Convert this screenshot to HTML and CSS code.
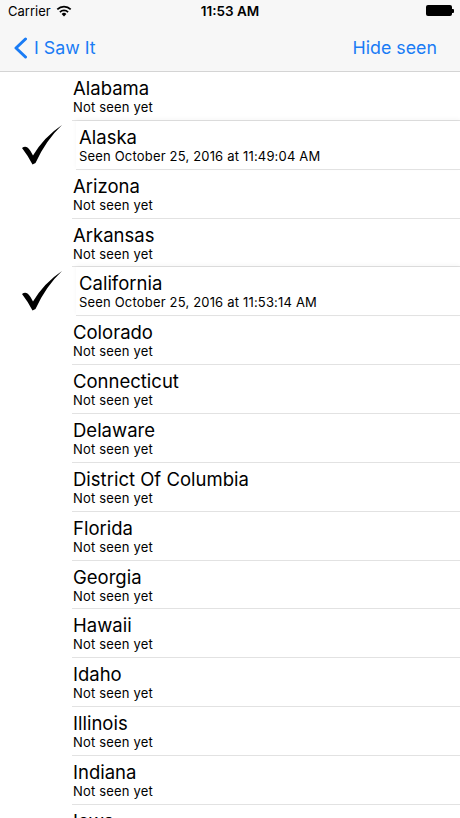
FILE: index.html
```html
<!DOCTYPE html>
<html lang="en">
<head>
    <meta charset="UTF-8">
    <meta name="viewport" content="width=device-width, initial-scale=1.0">
    <title>I Saw It</title>
    <link rel="stylesheet" href="styles.css">
</head>
<body>
    <header class="top">
        <div class="status-bar">
            <div class="status-left">
                <span>Carrier</span>
                <svg class="wifi" width="16" height="12" viewBox="0 0 16 12">
                    <path d="M8 11.5 L5.6 8.9 A3.4 3.4 0 0 1 10.4 8.9 Z" fill="#000"/>
                    <path d="M3.9 7.1 A5.9 5.9 0 0 1 12.1 7.1" stroke="#000" stroke-width="1.7" fill="none"/>
                    <path d="M1.3 4.4 A9.5 9.5 0 0 1 14.7 4.4" stroke="#000" stroke-width="1.7" fill="none"/>
                </svg>
            </div>
            <div class="status-time">11:53 AM</div>
            <div class="status-right">
                <span class="battery"></span>
                <span class="battery-tip"></span>
            </div>
        </div>
        <nav class="nav-bar">
            <a class="nav-back" href="#">
                <svg width="15" height="22" viewBox="0 0 15 22">
                    <path d="M12.5 2 L3 11 L12.5 20" stroke="#1a7cf5" stroke-width="3" fill="none" stroke-linecap="round" stroke-linejoin="round"/>
                </svg>
                <span>I Saw It</span>
            </a>
            <a class="nav-action" href="#">Hide seen</a>
        </nav>
    </header>

    <ul class="state-list" id="stateList"></ul>

    <script>
        const states = [
            ["Alabama", null],
            ["Alaska", "October 25, 2016 at 11:49:04 AM"],
            ["Arizona", null],
            ["Arkansas", null],
            ["California", "October 25, 2016 at 11:53:14 AM"],
            ["Colorado", null],
            ["Connecticut", null],
            ["Delaware", null],
            ["District Of Columbia", null],
            ["Florida", null],
            ["Georgia", null],
            ["Hawaii", null],
            ["Idaho", null],
            ["Illinois", null],
            ["Indiana", null],
            ["Iowa", null]
        ];

        const checkSvg = '<svg class="check" width="40" height="40" viewBox="0 0 40 40">' +
            '<path d="M0 23 Q4.5 19.5 8.5 26 L11 30.5 Q22 12 40 0 Q24 15 13.5 38 L10.5 39.5 Q5.5 30 0 23 Z" fill="#000"/></svg>';

        const list = document.getElementById("stateList");
        states.forEach(([name, seen]) => {
            const li = document.createElement("li");
            li.className = seen ? "state-row seen" : "state-row";
            li.innerHTML =
                '<div class="state-mark">' + (seen ? checkSvg : "") + '</div>' +
                '<div class="state-body">' +
                '<div class="state-name">' + name + '</div>' +
                '<div class="state-detail">' + (seen ? "Seen " + seen : "Not seen yet") + '</div>' +
                '</div>';
            list.appendChild(li);
        });
    </script>
</body>
</html>
```

FILE: styles.css
```css
* {
    margin: 0;
    padding: 0;
    box-sizing: border-box;
}

html, body {
    height: 100%;
    overflow: hidden;
}

body {
    font-family: 'Inter', 'Liberation Sans', sans-serif;
    background: #fff;
    color: #000;
}

a {
    text-decoration: none;
}

.top {
    background: #f7f7f7;
    border-bottom: 1px solid #d4d4d4;
}

.status-bar {
    height: 21px;
    display: flex;
    align-items: center;
    justify-content: space-between;
    padding: 0 6px 0 8px;
    font-size: 13px;
    position: relative;
}

.status-left {
    display: flex;
    align-items: center;
    gap: 5px;
}

.status-time {
    position: absolute;
    left: 0;
    right: 0;
    text-align: center;
    font-weight: 600;
    font-size: 13.5px;
}

.status-right {
    display: flex;
    align-items: center;
}

.battery {
    width: 26px;
    height: 11px;
    background: #000;
    border-radius: 2px;
}

.battery-tip {
    width: 2px;
    height: 4px;
    background: #000;
    border-radius: 0 1px 1px 0;
}

.nav-bar {
    height: 50px;
    display: flex;
    align-items: center;
    justify-content: space-between;
    padding: 3px 23px 0 13px;
    font-size: 17.8px;
}

.nav-back {
    display: flex;
    align-items: center;
    gap: 6px;
    color: #1a7cf5;
}

.nav-action {
    color: #1a7cf5;
}

.state-list {
    list-style: none;
}

.state-row {
    display: flex;
    height: 48.86px;
}

.state-mark {
    width: 72px;
    flex-shrink: 0;
    padding: 4px 0 0 22px;
}

.state-body {
    flex: 1;
    padding: 5px 0 0 1px;
    border-bottom: 1px solid #e2e2e2;
}

.seen .state-mark {
    width: 76px;
}

.seen .state-body {
    padding-left: 3px;
    box-shadow: 0 -2px 4px rgba(0, 0, 0, 0.04);
}

.state-name {
    font-size: 18.5px;
    line-height: 22px;
}

.state-detail {
    font-size: 13px;
    line-height: 16px;
    letter-spacing: 0.18px;
}
```
